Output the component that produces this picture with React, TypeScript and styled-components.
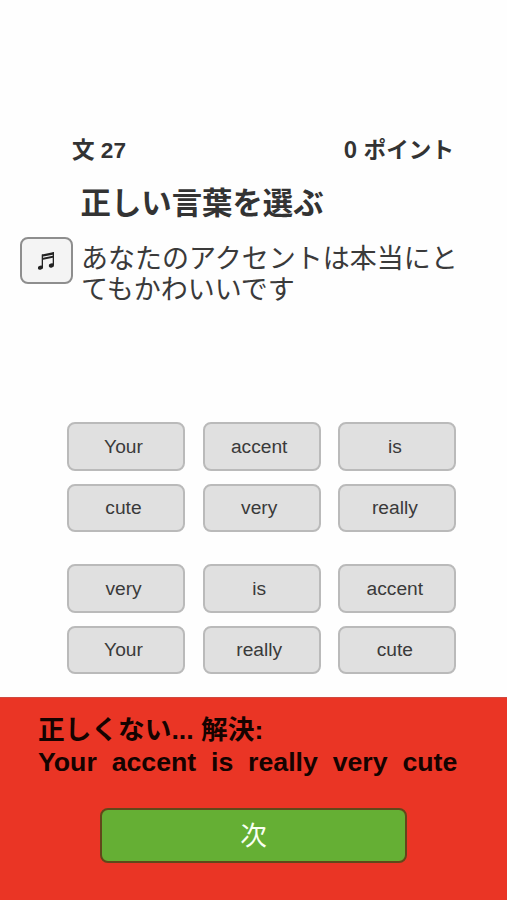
import React from 'react';
import styled, { createGlobalStyle } from 'styled-components';

const GlobalStyle = createGlobalStyle`
  * { box-sizing: border-box; }
  body { margin: 0; background: #fff; }
`;

const Screen = styled.main`
  width: 507px;
  height: 900px;
  display: flex;
  flex-direction: column;
  overflow: hidden;
  background: #fefefe;
  color: #333;
  font-family: 'Liberation Sans', 'Noto Sans CJK JP', sans-serif;
`;

const StatusBar = styled.header`
  display: flex;
  justify-content: space-between;
  margin: 135px 53px 0 72px;
  height: 32px;
  line-height: 32px;
  font-size: 22.6px;
  font-weight: 700;
  white-space: nowrap;
`;

const Points = styled.span`
  margin-top: -2px;
  font-family: 'Noto Sans CJK JP', sans-serif;
  word-spacing: 1.5px;
`;

const Title = styled.h1`
  margin: 13px 0 0 80.5px;
  height: 46px;
  line-height: 46px;
  font-size: 30.4px;
  font-weight: 700;
  white-space: nowrap;
`;

const Prompt = styled.section`
  display: flex;
  gap: 8px;
  margin: 11px 0 0 20px;
  height: 185px;
`;

const SoundButton = styled.button`
  display: flex;
  align-items: center;
  justify-content: center;
  width: 53px;
  height: 47px;
  padding: 0 2px 0 0;
  border: 2px solid #8e8e8e;
  border-radius: 8px;
  background: #f4f4f4;
`;

const Sentence = styled.p`
  margin: 7px 0 0;
  color: #3a3a3a;
  font-size: 27px;
  line-height: 31px;
  white-space: nowrap;
`;

const WordGrid = styled.div<{ $last?: boolean }>`
  display: grid;
  grid-template-columns: repeat(3, 118px);
  grid-auto-rows: 48.5px;
  gap: 13px 17.7px;
  margin: ${({ $last }) => ($last ? '32px' : '0')} 0 0 67px;
`;

const WordTile = styled.button`
  display: flex;
  align-items: center;
  justify-content: center;
  padding: 1px 5px 0 0;
  border: 2px solid #bababa;
  border-radius: 8px;
  background: #e0e0e0;
  color: #3a3a3a;
  font-family: inherit;
  font-size: 19.2px;
`;

const Feedback = styled.section`
  display: flex;
  flex-direction: column;
  flex: 1;
  margin-top: 23px;
  padding-top: 17px;
  border-top: 1px solid #cf4a40;
  background: #ea3525;
  color: #150300;
  font-size: 26.7px;
  font-weight: 700;
`;

const FeedbackLine = styled.div`
  height: 31.5px;
  margin-left: 38px;
  line-height: 31px;
  white-space: pre;
`;

const NextButton = styled.button`
  width: 307px;
  height: 55px;
  margin: 30px 0 0 100px;
  padding: 0 0 4px;
  border: 2px solid #61481a;
  border-radius: 8px;
  background: #65af34;
  color: #f8fff2;
  font-family: 'Noto Sans CJK JP', sans-serif;
  font-size: 26.5px;
  font-weight: 400;
  line-height: 44px;
`;

const answer = ['Your', 'accent', 'is', 'cute', 'very', 'really'];
const choices = ['very', 'is', 'accent', 'Your', 'really', 'cute'];
const solution = 'Your  accent  is  really  very  cute';

function NotesIcon() {
  return (
    <svg width="18" height="20" viewBox="0 0 18 20" fill="#222" aria-hidden="true">
      <path d="M5 3.4 17 1v2.4L5 5.8z M5 6.9 17 4.5v2L5 8.9z" />
      <path d="M4.7 3.5H6v13H4.7z M15.7 1.3H17v13h-1.3z" />
      <ellipse cx="3.5" cy="16.6" rx="2.7" ry="2" transform="rotate(-18 3.5 16.6)" />
      <ellipse cx="14.4" cy="14.5" rx="2.7" ry="2" transform="rotate(-18 14.4 14.5)" />
    </svg>
  );
}

export default function App() {
  return (
    <>
      <GlobalStyle />
      <Screen>
        <StatusBar>
          <span>文 27</span>
          <Points>0 ポイント</Points>
        </StatusBar>
        <Title>正しい言葉を選ぶ</Title>
        <Prompt>
          <SoundButton aria-label="再生">
            <NotesIcon />
          </SoundButton>
          <Sentence>
            あなたのアクセントは本当にと
            <br />
            てもかわいいです
          </Sentence>
        </Prompt>
        <WordGrid>
          {answer.map((word) => (
            <WordTile key={word}>{word}</WordTile>
          ))}
        </WordGrid>
        <WordGrid $last>
          {choices.map((word) => (
            <WordTile key={word}>{word}</WordTile>
          ))}
        </WordGrid>
        <Feedback>
          <FeedbackLine>正しくない... 解決:</FeedbackLine>
          <FeedbackLine>{solution}</FeedbackLine>
          <NextButton>次</NextButton>
        </Feedback>
      </Screen>
    </>
  );
}
